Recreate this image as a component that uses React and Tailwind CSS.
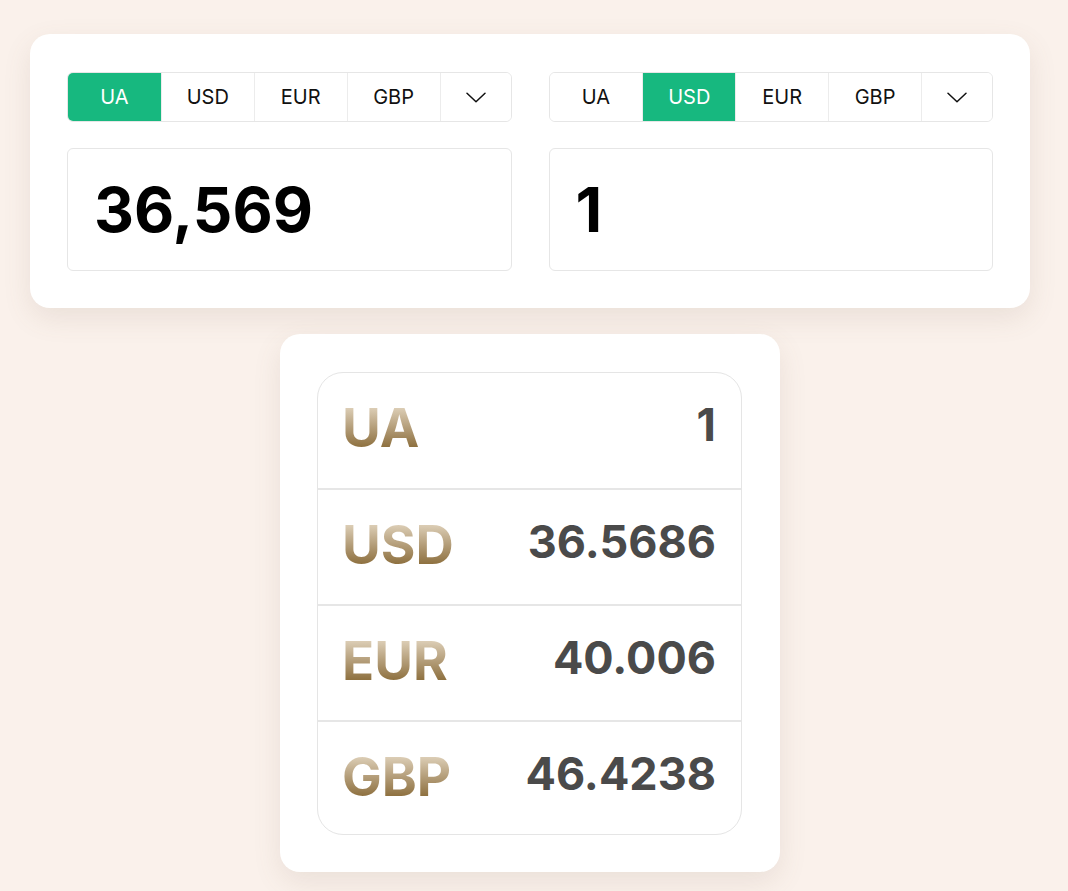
import React from "react";

const TABS = ["UA", "USD", "EUR", "GBP"];

function Chevron() {
  return (
    <svg width="20" height="11" viewBox="0 0 20 11" fill="none">
      <path d="M1 1.2 L10 9.8 L19 1.2" stroke="#111" strokeWidth="1.5" strokeLinecap="round" strokeLinejoin="round" />
    </svg>
  );
}

function TabBar({ active }) {
  return (
    <div className="grid h-[50px] grid-cols-[1fr_1fr_1fr_1fr_71px] overflow-hidden rounded-[6px] border border-[#e6e6e6]">
      {TABS.map((t, i) => (
        <div
          key={t}
          className={
            (t === active ? "bg-[#17b87f] text-white " : "bg-white text-[#111] ") +
            (i > 0 ? "border-l border-[#ececec] " : "") +
            "flex items-center justify-center text-[20px] font-normal"
          }
          style={{ fontFamily: "Inter, 'Noto Sans', sans-serif" }}
        >
          {t}
        </div>
      ))}
      <div className="flex items-center justify-center border-l border-[#ececec] bg-white">
        <Chevron />
      </div>
    </div>
  );
}

function BigNumber({ children }) {
  return (
    <div className="mt-[26px] flex h-[123px] items-center rounded-[6px] border border-[#e6e6e6] bg-white pl-[26px]">
      <div
        className="text-[62px] font-bold leading-none text-black"
        style={{ fontFamily: "Inter, 'Liberation Sans', sans-serif" }}
      >
        {children}
      </div>
    </div>
  );
}

const ROWS = [
  { label: "UA", value: "1", h: "h-[115px]" },
  { label: "USD", value: "36.5686", h: "h-[116px]" },
  { label: "EUR", value: "40.006", h: "h-[116px]" },
  { label: "GBP", value: "46.4238", h: "h-[114px]" },
];

export default function App() {
  return (
    <div className="min-h-screen w-full bg-[#faf1eb]">
      <div className="flex w-[1060px] flex-col items-center pt-[34px] pb-[19px]">
        <div className="w-[1000px] rounded-[20px] bg-white px-[37px] pt-[38px] pb-[37px] shadow-[0_10px_28px_rgba(120,100,80,0.12)]">
          <div className="grid grid-cols-2 gap-[37px]">
            <div>
              <TabBar active="UA" />
              <BigNumber>36,569</BigNumber>
            </div>
            <div>
              <TabBar active="USD" />
              <BigNumber>1</BigNumber>
            </div>
          </div>
        </div>

        <div className="mt-[26px] w-[500px] rounded-[20px] bg-white pt-[38px] pb-[37px] pl-[37px] pr-[38px] shadow-[0_10px_28px_rgba(120,100,80,0.12)]">
          <div className="overflow-hidden rounded-[26px] border border-[#e5e5e5]">
            {ROWS.map((r, i) => (
              <div
                key={r.label}
                className={
                  (i > 0 ? "border-t-2 border-[#e6e6e6] " : "") +
                  r.h +
                  " flex items-start justify-between pl-[24px] pr-[25px] pt-[29px]"
                }
              >
                <div
                  className="bg-gradient-to-b from-[#e8dcc8] to-[#7f5f26] bg-clip-text text-[53px] font-bold leading-none text-transparent"
                  style={{ fontFamily: "Inter, 'Liberation Sans', sans-serif" }}
                >
                  {r.label}
                </div>
                <div
                  className="text-[45px] font-bold leading-none text-[#4a4a4a]"
                  style={{ fontFamily: "Inter, 'Liberation Sans', sans-serif" }}
                >
                  {r.value}
                </div>
              </div>
            ))}
          </div>
        </div>
      </div>
    </div>
  );
}
